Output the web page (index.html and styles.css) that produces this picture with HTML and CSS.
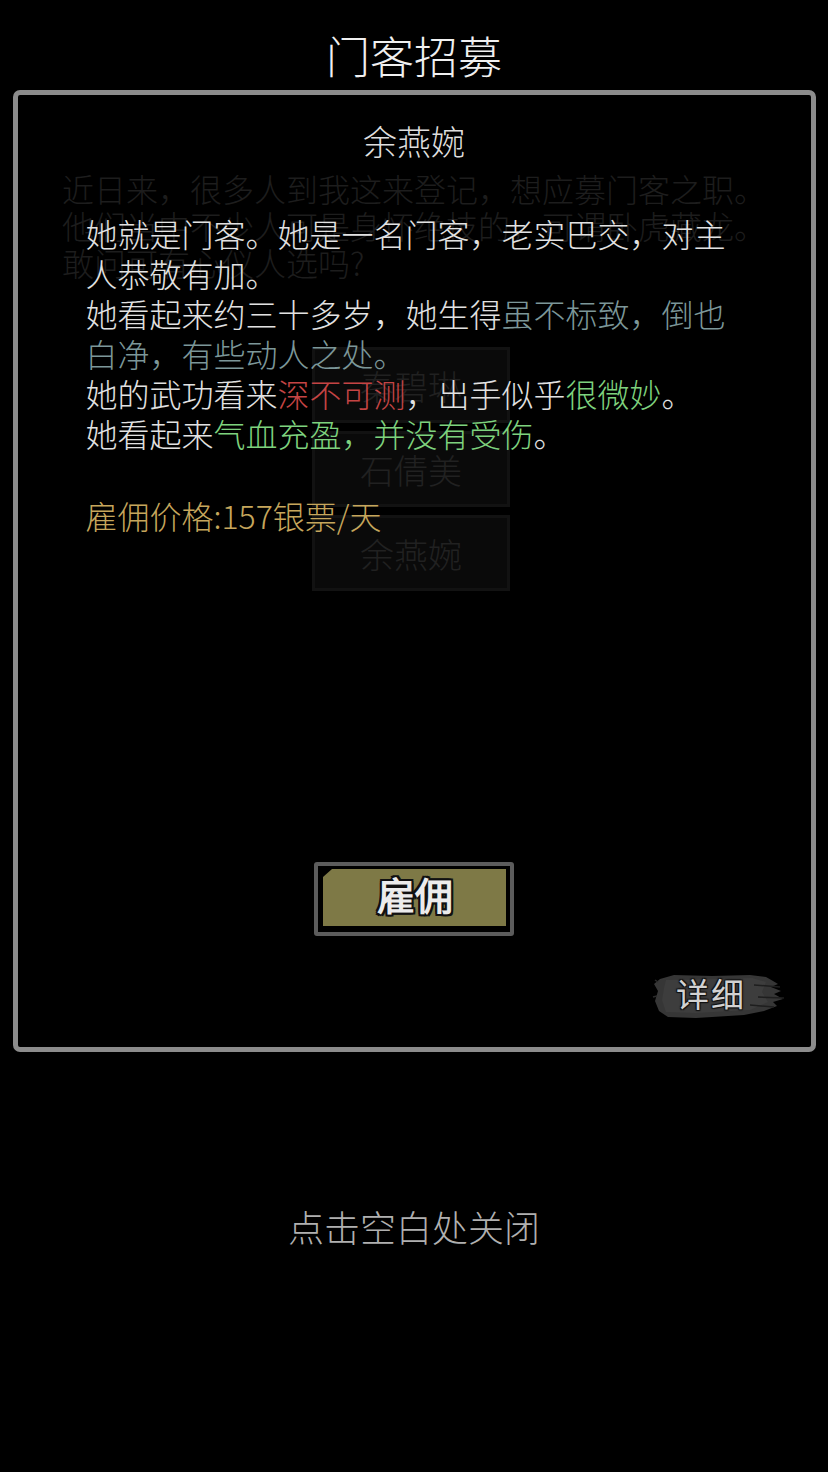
FILE: index.html
```html
<!DOCTYPE html>
<html lang="zh-CN">
<head>
    <meta charset="UTF-8">
    <meta name="viewport" content="width=device-width, initial-scale=1.0">
    <title>门客招募</title>
    <link rel="stylesheet" href="styles.css">
</head>
<body>
    <div class="screen">

        <!-- 底层：门客登记页面（被遮罩压暗） -->
        <div class="scene">
            <p class="intro">近日来，很多人到我这来登记，想应募门客之职。他们当中不少人可是身怀绝技的，可谓卧虎藏龙。敢问可有心仪人选吗?</p>
            <div class="candidates">
                <button class="candidate">秦碧琳</button>
                <button class="candidate">石倩美</button>
                <button class="candidate">余燕婉</button>
            </div>
        </div>

        <!-- 弹窗：门客详情 -->
        <div class="mask">
            <h1 class="title">门客招募</h1>

            <div class="panel">
                <h2 class="name">余燕婉</h2>

                <div class="desc">
                    <p>她就是门客。她是一名门客，老实巴交，对主人恭敬有加。</p>
                    <p>她看起来约三十多岁，她生得<span class="looks">虽不标致，倒也白净，有些动人之处。</span></p>
                    <p>她的武功看来<span class="danger">深不可测</span>，出手似乎<span class="good">很微妙</span>。</p>
                    <p>她看起来<span class="good">气血充盈，并没有受伤</span>。</p>
                </div>

                <p class="price">雇佣价格:157银票/天</p>

                <div class="actions">
                    <button class="hire"><span class="hire-face">雇佣</span></button>
                </div>

                <div class="panel-foot">
                    <button class="detail">
                        <svg class="brush" width="136" height="50" viewBox="0 0 136 50">
                            <path d="M8 7 L22 3 L60 4 L98 3 L114 5 L121 9 L126 12 L119 15 L129 19 L122 22 L131 27 L121 30 L125 34 L112 39 L92 43 L44 46 L16 45 L7 39 L3 29 L6 19 L2 12 Z" fill="#363636"/>
                            <path d="M14 8 L60 7 L100 6 L114 10 L110 20 L116 30 L98 38 L44 41 L14 40 L10 28 L12 16 Z" fill="#3d3d3d"/>
                            <path d="M102 13 L128 15 M106 25 L132 26 M98 33 L122 35" stroke="#1e1e1e" stroke-width="1.5"/>
                            <path d="M6 10 L3 8 M5 24 L1 25" stroke="#2c2c2c" stroke-width="1.5"/>
                        </svg>
                        <span class="detail-label">详细</span>
                    </button>
                </div>
            </div>

            <p class="close-tip">点击空白处关闭</p>
        </div>

    </div>
</body>
</html>
```

FILE: styles.css
```css
* {
    box-sizing: border-box;
}

body {
    margin: 0;
    background-color: #000;
    font-family: "Noto Sans CJK SC", "Noto Sans", sans-serif;
}

.screen {
    position: relative;
    width: 828px;
    height: 1472px;
    overflow: hidden;
}

/* 底层页面 */
.scene {
    padding: 170px 0 0 62px;
}

.intro {
    width: 710px;
    margin: 0;
    font-size: 32px;
    line-height: 37px;
    font-weight: 300;
    color: #1d1d1d;
}

.candidates {
    display: flex;
    flex-direction: column;
    gap: 8px;
    width: 198px;
    margin: 66px 0 0 250px;
}

.candidate {
    height: 76px;
    border: 3px solid #121212;
    background-color: #0a0a0a;
    color: #212121;
    font-family: inherit;
    font-size: 34px;
    font-weight: 300;
    padding: 0;
}

/* 弹窗 */
.mask {
    position: absolute;
    top: 0;
    left: 0;
    width: 100%;
    height: 100%;
    display: flex;
    flex-direction: column;
    align-items: center;
}

.title {
    margin: 0;
    padding-top: 28px;
    font-size: 44px;
    line-height: 54px;
    font-weight: 300;
    color: #f0f0f0;
}

.panel {
    width: 803px;
    height: 962px;
    margin-top: 8px;
    border: 5px solid #8c8c8c;
    border-radius: 7px;
    display: flex;
    flex-direction: column;
}

.name {
    margin: 24px 0 0;
    text-align: center;
    font-size: 34px;
    line-height: 44px;
    font-weight: 300;
    color: #dedede;
}

.desc {
    width: 718px;
    margin-top: 50px;
    padding-left: 68px;
    font-size: 32px;
    line-height: 40px;
    font-weight: 300;
    color: #e2e2e2;
}

.desc p {
    margin: 0;
}

.looks {
    color: #7c9799;
}

.danger {
    color: #c44444;
}

.good {
    color: #7ed27e;
}

.price {
    margin: 42px 0 0;
    padding-left: 68px;
    font-size: 32px;
    line-height: 40px;
    font-weight: 300;
    color: #c6a65c;
}

.actions {
    display: flex;
    justify-content: center;
    margin-top: 327px;
}

.hire {
    width: 200px;
    padding: 3px 4px 6px 5px;
    border: 4px solid #5c5c5c;
    border-radius: 3px;
    background-color: #000;
    cursor: pointer;
}

.hire-face {
    display: block;
    height: 57px;
    background-color: #7e7946;
    clip-path: polygon(9px 0, 100% 0, 100% 100%, 0 100%, 0 8px);
    font-family: inherit;
    font-size: 38px;
    line-height: 57px;
    font-weight: 700;
    color: #ececec;
    text-shadow: 2px 0 0 #111, -2px 0 0 #111, 0 2px 0 #111, 0 -2px 0 #111,
                 2px 2px 0 #111, -2px -2px 0 #111, 2px -2px 0 #111, -2px 2px 0 #111;
}

.panel-foot {
    display: flex;
    justify-content: flex-end;
    margin-top: 36px;
    padding-right: 23px;
}

.detail {
    position: relative;
    width: 136px;
    height: 50px;
    padding: 0;
    border: none;
    background: none;
    cursor: pointer;
}

.brush {
    display: block;
}

/* 文字压在笔刷上 */
.detail-label {
    position: absolute;
    top: 0;
    left: 24px;
    font-family: inherit;
    font-size: 33px;
    line-height: 48px;
    letter-spacing: 2px;
    color: #d2d2d2;
    text-shadow: 1px 1px 1px #111, -1px -1px 1px #111, 1px -1px 1px #111, -1px 1px 1px #111;
}

.close-tip {
    margin: 149px 0 0;
    font-size: 36px;
    line-height: 50px;
    font-weight: 300;
    color: #b0b0b0;
}
```
